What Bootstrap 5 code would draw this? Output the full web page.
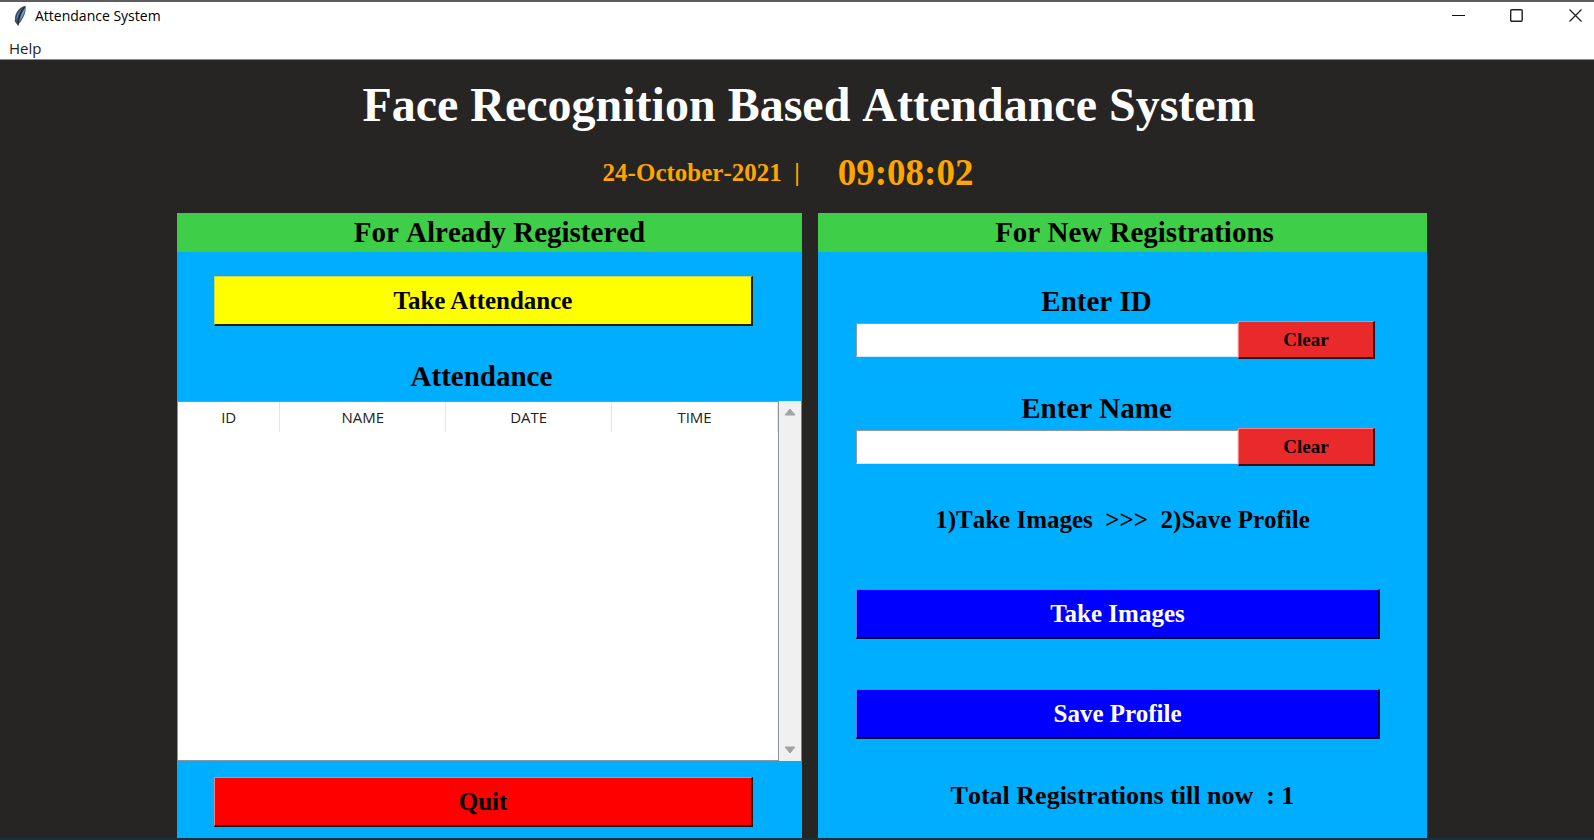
<!DOCTYPE html>
<html lang="en">
<head>
<meta charset="utf-8">
<meta name="viewport" content="width=device-width, initial-scale=1">
<title>Attendance System</title>
<link href="https://cdn.jsdelivr.net/npm/bootstrap@5.3.0/dist/css/bootstrap.min.css" rel="stylesheet">
<style>
  body { font-family: "Liberation Serif", serif; font-weight: 700; font-kerning: none; color: #000; background: #262523; }
  .ui-sans { font-family: "Open Sans", "Noto Sans", sans-serif; font-weight: 400; font-size: 14px; line-height: 20px; font-kerning: auto; }
  .window-frame { border-top: 2px solid #5f5c60; border-bottom: 2px solid #14323c; }
  .title-bar { height: 28px; padding-left: 13px; background: #fff; }
  .win-controls { gap: 23px; }
  .win-btn { width: 36px; height: 28px; padding: 0; border: 0; background: none; display: flex; align-items: center; justify-content: center; }
  .menu-bar { height: 30px; padding: 8px 9px 1px; background: #fff; border-bottom: 1px solid #8c8b88; }
  .menu-bar a { display: block; width: max-content; font-size: 15px; color: #222; text-decoration: none; }
  .app-title { font-size: 48px; line-height: 56px; font-weight: 700; color: #fff; margin: 17px 0 0; padding-left: 24px; }
  .clock-row { height: 80px; color: #ffa500; gap: 38px; padding-right: 18px; }
  .date-text { font-size: 25px; white-space: pre; }
  .time-text { font-size: 37px; }
  .panels { display: grid; grid-template-columns: 177fr 625fr 16fr 609fr 167fr; }
  .panel-left { grid-column: 2; }
  .panel-right { grid-column: 4; }
  .panel { min-width: 0; background: #00aeff; display: flex; flex-direction: column; }
  .panel-title { font-size: 29px; line-height: 39px; font-weight: 700; background: #3ece48; margin: 0; text-align: center; padding-left: 24px; }
  .panel-left .panel-title { padding-left: 20px; }
  .field-label { display: block; font-size: 29px; line-height: 30px; font-weight: 700; margin: 0; text-align: center; }
  .tk-btn { border: solid; border-width: 1px 2px 2px 1px; border-radius: 0; font-size: 25px; line-height: 30px; font-weight: 700; height: 50px; padding: 0; color: #000; }
  .tk-yellow { background: #ff0; border-color: #c6d84a #1c1c00 #1c1c00 #c6d84a; }
  .tk-red { background: #f00; border-color: #f08080 #2a0810 #2a0810 #f08080; }
  .tk-blue { background: #00f; border-color: #6a70ff #000038 #000038 #6a70ff; color: #fff; }
  .tk-clear { background: #ea2a2a; border-width: 1px 2px 2px 1px; border-color: #f58080 #351014 #351014 #f58080; font-size: 19px; line-height: 24px; height: 38px; flex: 0 0 137px; }
  .left-pad { margin-left: 37px; margin-right: 49px; }
  .right-pad { margin-left: 38px; margin-right: 47px; }
  .list-label { margin: 35px 0 10px; }
  .quit-btn { margin-bottom: 11px; }
  .reg-label { margin-top: 34px; padding-right: 52px; }
  .entry-row { margin: 5px 52px 0 38px; }
  .entry-box { border-radius: 0; height: 34px; border: 1px solid; border-color: #8f9aa5 #d8e8f0 #d8e8f0 #8f9aa5; background: #fff; min-width: 0; flex: 1 1 0; padding: 0 6px; font-size: 25px; }
  .list-wrap { flex: 1 0 360px; margin-right: 1px; }
  .list-box { flex: 1 1 0; min-width: 0; background: #fff; border: 1px solid #8b939b; }
  .att-table { width: 100%; table-layout: fixed; border-collapse: collapse; color: #222; }
  .att-table th { font-weight: 400; font-size: 15px; text-align: center; height: 30px; padding: 0; border-right: 1px solid #e4e4e4; }
  .col-id { width: 17%; }
  .scroll-strip { width: 22px; background: #f0f0f0; padding: 6px 0; }
  .scroll-strip button { border: 0; background: none; padding: 0; line-height: 0; }
  .note-text { font-size: 25px; line-height: 30px; text-align: center; white-space: pre-wrap; margin: 0; }
  .steps-note { margin: 39px 0 54px; }
  .save-btn { margin-top: 50px; }
  .total-note { margin-top: 42px; font-size: 26px; }
</style>
</head>
<body>
<div class="window-frame min-vh-100 d-flex flex-column">
  <header class="title-bar ui-sans d-flex align-items-center">
    <svg width="14" height="22" viewBox="0 0 14 22" aria-hidden="true">
      <path d="M12.500 0.800C8 1.500 3 6 2 12L1.800 16.500 4.500 20 7.500 17C11 12 13.500 6 12.500 0.800Z" fill="#3c536b"/>
      <path d="M12 2.500C9.500 6 7.500 11 6 17C9.500 12 12.500 7 12 2.500Z" fill="#6d9ad0"/>
      <path d="M8.500 4.500C5.500 7 3.500 11 3.500 15C4.500 11 6 8 8.500 4.500Z" fill="#6d9ad0"/>
      <path d="M11.500 2C8 6 5.500 12 5 20.500" fill="none" stroke="#222c35" stroke-width="1.300"/>
    </svg>
    <span class="ms-2">Attendance System</span>
    <div class="win-controls d-flex ms-auto">
      <button type="button" class="win-btn" aria-label="Minimize"><svg width="14" height="14"><path d="M1 6.500H14" stroke="#111"/></svg></button>
      <button type="button" class="win-btn" aria-label="Maximize"><svg width="14" height="14"><rect x="0.700" y="0.700" width="11.500" height="11.500" rx="1" fill="none" stroke="#222" stroke-width="1.400"/></svg></button>
      <button type="button" class="win-btn" aria-label="Close"><svg width="14" height="14"><path d="M0.500 0.500L12.500 12.500M12.500 0.500L0.500 12.500" stroke="#222" stroke-width="1.300"/></svg></button>
    </div>
  </header>
  <nav class="menu-bar ui-sans"><a href="#">Help</a></nav>

  <h1 class="app-title text-center">Face Recognition Based Attendance System</h1>
  <div class="clock-row d-flex justify-content-center align-items-center">
    <span class="date-text">24-October-2021  |</span>
    <span class="time-text">09:08:02</span>
  </div>

  <main class="panels flex-grow-1">
    <section class="panel panel-left">
      <h2 class="panel-title">For Already Registered</h2>
      <button type="button" class="btn tk-btn tk-yellow left-pad mt-4">Take Attendance</button>
      <h3 class="field-label list-label pe-3">Attendance</h3>
      <div class="list-wrap d-flex">
        <div class="list-box">
          <table class="att-table ui-sans">
            <colgroup><col class="col-id"><col><col><col></colgroup>
            <thead><tr><th scope="col">ID</th><th scope="col">NAME</th><th scope="col">DATE</th><th scope="col">TIME</th></tr></thead>
          </table>
        </div>
        <div class="scroll-strip d-flex flex-column justify-content-between align-items-center">
          <button type="button" aria-label="Scroll up"><svg width="12" height="10"><path d="M6 2L11 8H1Z" fill="#a3a3a3" stroke="#a3a3a3" stroke-linejoin="round"/></svg></button>
          <button type="button" aria-label="Scroll down"><svg width="12" height="10"><path d="M6 8L11 2H1Z" fill="#a3a3a3" stroke="#a3a3a3" stroke-linejoin="round"/></svg></button>
        </div>
      </div>
      <button type="button" class="btn tk-btn tk-red left-pad mt-3 quit-btn">Quit</button>
    </section>

    <section class="panel panel-right">
      <h2 class="panel-title">For New Registrations</h2>
      <label class="field-label reg-label" for="regId">Enter ID</label>
      <div class="entry-row d-flex align-items-center">
        <input type="text" id="regId" class="entry-box">
        <button type="button" class="btn tk-btn tk-clear">Clear</button>
      </div>
      <label class="field-label reg-label" for="regName">Enter Name</label>
      <div class="entry-row d-flex align-items-center">
        <input type="text" id="regName" class="entry-box">
        <button type="button" class="btn tk-btn tk-clear">Clear</button>
      </div>
      <p class="note-text steps-note">1)Take Images  &gt;&gt;&gt;  2)Save Profile</p>
      <button type="button" class="btn tk-btn tk-blue right-pad">Take Images</button>
      <button type="button" class="btn tk-btn tk-blue right-pad save-btn">Save Profile</button>
      <p class="note-text total-note">Total Registrations till now  : 1</p>
    </section>
  </main>
</div>
<script src="https://cdn.jsdelivr.net/npm/bootstrap@5.3.0/dist/js/bootstrap.bundle.min.js"></script>
</body>
</html>
